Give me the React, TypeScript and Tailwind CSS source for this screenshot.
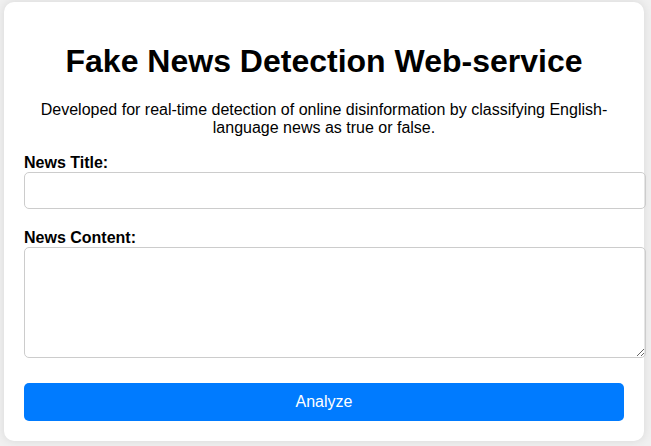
export default function App() {
  return (
    <div className="min-h-[446px] bg-[#f0f0f0] pt-[2px] pl-[4px] font-['Liberation_Sans',Arial,sans-serif] text-black">
      <div className="w-[640px] rounded-[10px] bg-white p-5 shadow-[0_0_10px_rgba(0,0,0,0.1)]">
        <h1 className="mt-[21px] mb-[21px] text-center text-[32px] leading-[37px] font-bold">
          Fake News Detection Web-service
        </h1>
        <p className="mb-4 text-center text-base leading-[18.4px]">
          Developed for real-time detection of online disinformation by classifying English-language news as true or
          false.
        </p>
        <form onSubmit={(e) => e.preventDefault()}>
          <label htmlFor="title" className="block text-base leading-[18px] font-bold">
            News Title:
          </label>
          <input
            id="title"
            type="text"
            className="mb-5 box-content block h-[19px] w-[600px] rounded-[5px] border border-[#ccc] px-[10px] py-[8px] text-base outline-none"
          />
          <label htmlFor="content" className="block text-base leading-[18px] font-bold">
            News Content:
          </label>
          <textarea
            id="content"
            className="box-content block h-[89px] w-[600px] rounded-[5px] border border-[#ccc] px-[10px] py-[10px] text-base outline-none"
          />
          <button
            type="submit"
            className="mt-[25px] block h-[38px] w-[600px] rounded-[5px] bg-[#007bff] text-base leading-[18px] text-white"
          >
            Analyze
          </button>
        </form>
      </div>
    </div>
  )
}
